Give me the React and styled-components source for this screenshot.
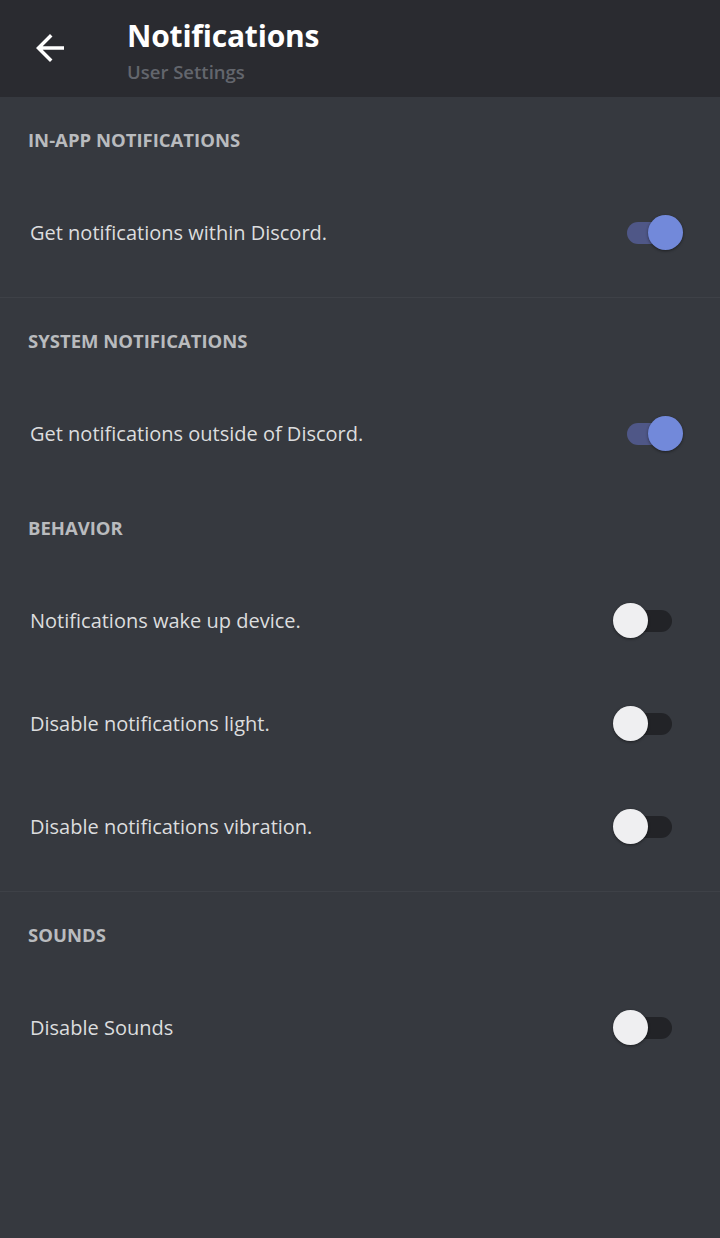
import React from "react";
import styled, { createGlobalStyle } from "styled-components";

const GlobalStyle = createGlobalStyle`
  html, body {
    margin: 0;
    padding: 0;
    background: #36393f;
  }
  body {
    font-family: "Open Sans", "Noto Sans", sans-serif;
    -webkit-font-smoothing: antialiased;
  }
`;

const sections = [
  {
    group: 1,
    title: "In-App Notifications",
    rows: [{ label: "Get notifications within Discord.", on: true }],
  },
  {
    group: 2,
    title: "System Notifications",
    rows: [{ label: "Get notifications outside of Discord.", on: true }],
  },
  {
    group: 2,
    title: "Behavior",
    rows: [
      { label: "Notifications wake up device.", on: false },
      { label: "Disable notifications light.", on: false },
      { label: "Disable notifications vibration.", on: false },
    ],
  },
  {
    group: 3,
    title: "Sounds",
    rows: [{ label: "Disable Sounds", on: false }],
  },
];

const BackArrow = () => (
  <svg width="42" height="42" viewBox="0 0 24 24" fill="#ffffff">
    <path d="M20 11H7.83l5.59-5.59L12 4l-8 8 8 8 1.41-1.41L7.83 13H20v-2z" />
  </svg>
);

const Switch = ({ on }) => (
  <SwitchBox>
    <Track $on={on} />
    <Knob $on={on} />
  </SwitchBox>
);

export default function App() {
  const groups = [1, 2, 3].map((g) => sections.filter((s) => s.group === g));

  return (
    <>
      <GlobalStyle />
      <Page>
        <Header>
          <BackButton>
            <BackArrow />
          </BackButton>
          <HeaderText>
            <Title>Notifications</Title>
            <Subtitle>User Settings</Subtitle>
          </HeaderText>
        </Header>

        {groups.map((group, i) => (
          <Group key={i} $last={i === groups.length - 1}>
            {group.map((section) => (
              <section key={section.title}>
                <SectionTitle>{section.title}</SectionTitle>
                {section.rows.map((row) => (
                  <Row key={row.label}>
                    <Label>{row.label}</Label>
                    <Switch on={row.on} />
                  </Row>
                ))}
              </section>
            ))}
          </Group>
        ))}
      </Page>
    </>
  );
}

const Page = styled.div`
  min-height: 1238px;
  background: #36393f;
`;

const Header = styled.header`
  height: 97px;
  background: #2a2b30;
  display: flex;
  align-items: flex-start;
`;

const BackButton = styled.div`
  width: 42px;
  height: 42px;
  margin: 27px 0 0 29px;
  display: flex;
`;

const HeaderText = styled.div`
  margin: 15px 0 0 56px;
  display: flex;
  flex-direction: column;
`;

const Title = styled.h1`
  margin: 0;
  font-size: 30px;
  line-height: 42px;
  font-weight: 700;
  letter-spacing: -0.2px;
  color: #ffffff;
`;

const Subtitle = styled.div`
  margin-top: 4px;
  font-size: 18.5px;
  line-height: 22px;
  font-weight: 600;
  color: #63666d;
`;

const Group = styled.div`
  padding-bottom: ${(p) => (p.$last ? "0" : "13px")};
  border-bottom: ${(p) => (p.$last ? "none" : "1px solid #3e4147")};
`;

const SectionTitle = styled.h2`
  margin: 0;
  height: 84px;
  padding-left: 28px;
  display: flex;
  align-items: center;
  font-size: 18.5px;
  font-weight: 700;
  text-transform: uppercase;
  color: #b9bbbe;
`;

const Row = styled.div`
  height: 103px;
  padding: 0 37px 0 30px;
  display: flex;
  align-items: center;
  justify-content: space-between;
`;

const Label = styled.span`
  font-size: 20px;
  color: #dcddde;
`;

const SwitchBox = styled.div`
  position: relative;
  width: 70px;
  height: 35px;
  display: flex;
  align-items: center;
`;

const Track = styled.div`
  margin-left: 14px;
  width: 45px;
  height: 22px;
  border-radius: 11px;
  background: ${(p) => (p.$on ? "#4f5787" : "#222327")};
`;

const Knob = styled.div`
  position: absolute;
  top: 0;
  left: ${(p) => (p.$on ? "35px" : "0")};
  width: 35px;
  height: 35px;
  border-radius: 50%;
  background: ${(p) => (p.$on ? "#7289da" : "#efeff1")};
  box-shadow: 0 1px 3px rgba(0, 0, 0, 0.45);
`;
